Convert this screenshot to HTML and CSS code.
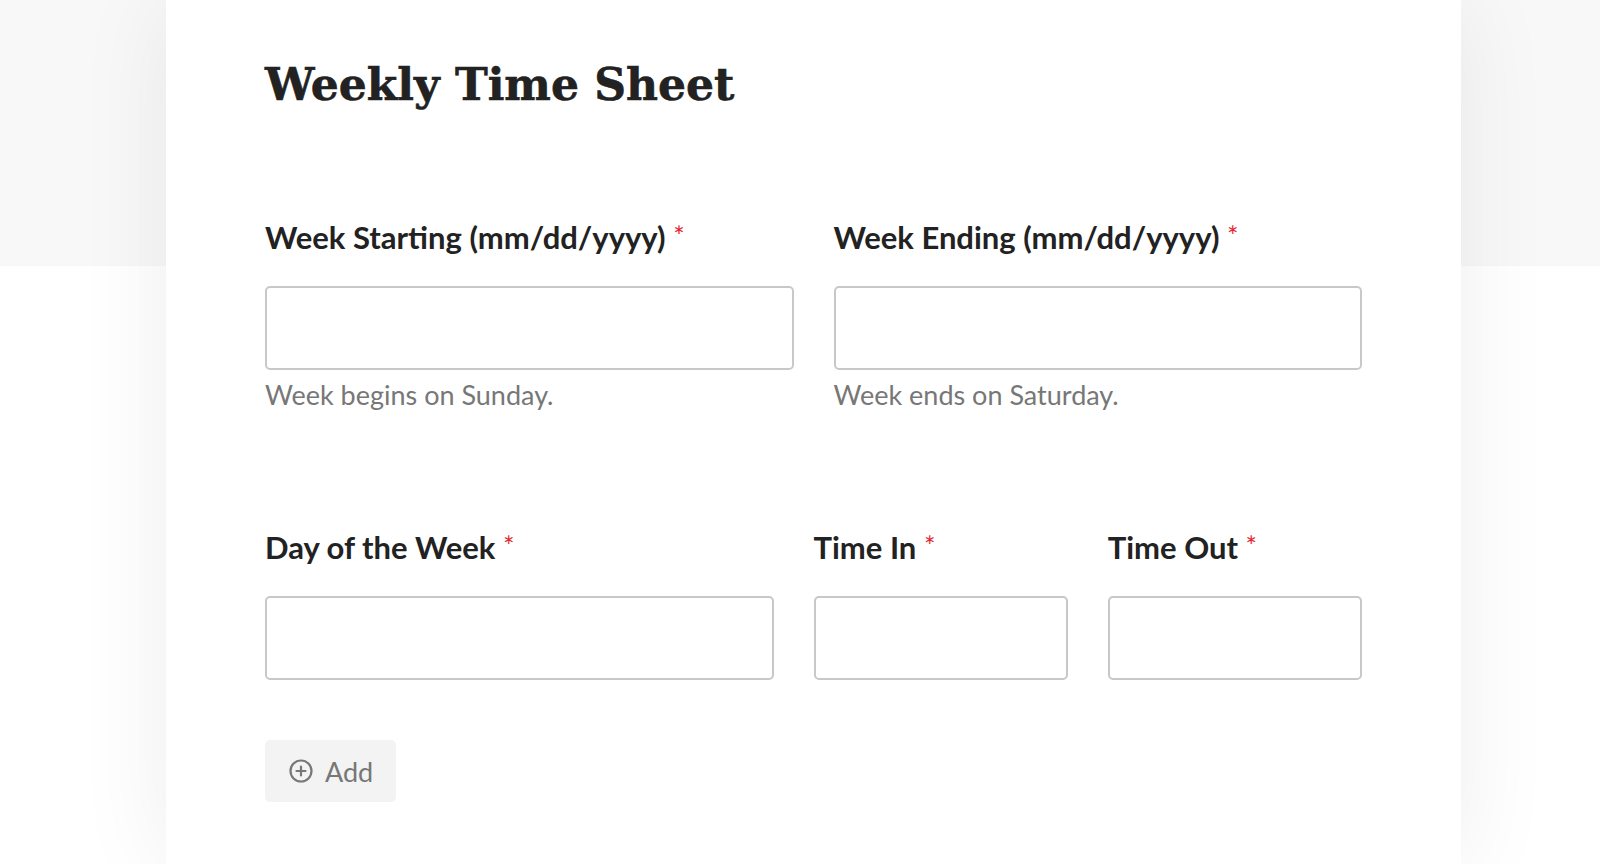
FILE: index.html
```html
<!DOCTYPE html>
<html lang="en">
<head>
    <meta charset="UTF-8">
    <meta name="viewport" content="width=device-width, initial-scale=1.0">
    <title>Weekly Time Sheet</title>
    <link rel="stylesheet" href="styles.css">
</head>
<body>
    <div class="sheet">
        <h1 class="sheet-title">Weekly Time Sheet</h1>

        <form class="sheet-form" onsubmit="return false">
            <div class="row row-week">
                <div class="field">
                    <label for="week-start">Week Starting (mm/dd/yyyy) <span class="req">*</span></label>
                    <input type="text" id="week-start">
                    <div class="help">Week begins on Sunday.</div>
                </div>
                <div class="field">
                    <label for="week-end">Week Ending (mm/dd/yyyy) <span class="req">*</span></label>
                    <input type="text" id="week-end">
                    <div class="help">Week ends on Saturday.</div>
                </div>
            </div>

            <div class="row row-day">
                <div class="field">
                    <label for="day">Day of the Week <span class="req">*</span></label>
                    <input type="text" id="day">
                </div>
                <div class="field">
                    <label for="time-in">Time In <span class="req">*</span></label>
                    <input type="text" id="time-in">
                </div>
                <div class="field">
                    <label for="time-out">Time Out <span class="req">*</span></label>
                    <input type="text" id="time-out">
                </div>
            </div>

            <button type="button" class="add-btn">
                <svg class="add-icon" width="24" height="24" viewBox="0 0 24 24" fill="none" stroke="currentColor" stroke-width="2.2" stroke-linecap="round">
                    <circle cx="12" cy="12" r="10.5"/>
                    <path d="M12 7.5v9M7.5 12h9"/>
                </svg>
                Add
            </button>
        </form>
    </div>
</body>
</html>
```

FILE: styles.css
```css
body, html {
    margin: 0;
    padding: 0;
    height: 100%;
}
body {
    font-family: Lato, "Open Sans", Arial, sans-serif;
    background: linear-gradient(#f8f8f8 0, #f8f8f8 266px, #ffffff 266px);
    color: #222;
}
.sheet {
    box-sizing: border-box;
    width: 1295px;
    min-height: 100%;
    margin-left: 166px;
    padding: 57px 99px 40px;
    background-color: white;
    box-shadow: 0 0 90px rgba(0,0,0,0.07);
}
.sheet-title {
    margin: 0;
    font-family: "DejaVu Serif", "Liberation Serif", serif;
    font-weight: bold;
    font-size: 44px;
    line-height: 56px;
    color: #222;
    -webkit-text-stroke: 0.6px #222;
}
.row {
    display: grid;
    column-gap: 40px;
}
.row-week {
    grid-template-columns: 1fr 1fr;
    margin-top: 104px;
}
.row-day {
    grid-template-columns: 2fr 1fr 1fr;
    margin-top: 116px;
}
.field label {
    display: block;
    font-size: 31px;
    font-weight: bold;
    line-height: 38px;
    color: #222;
    margin-bottom: 30px;
}
.req {
    color: #e3262f;
    font-weight: normal;
    font-size: 27px;
    vertical-align: 3px;
}
.field input {
    display: block;
    box-sizing: border-box;
    width: 100%;
    height: 84px;
    margin: 0;
    border: 2px solid #c8c8c8;
    border-radius: 5px;
    background: white;
    font-family: inherit;
    font-size: 24px;
    padding: 0 16px;
}
.help {
    margin-top: 9px;
    font-size: 27px;
    line-height: 32px;
    color: #777;
}
.add-btn {
    display: flex;
    align-items: center;
    gap: 12px;
    margin-top: 60px;
    height: 62px;
    padding: 0 23px 0 24px;
    border: none;
    border-radius: 5px;
    background-color: #f3f3f3;
    color: #777;
    font-family: inherit;
    font-size: 27px;
    cursor: pointer;
}
.add-icon {
    display: block;
}
```
